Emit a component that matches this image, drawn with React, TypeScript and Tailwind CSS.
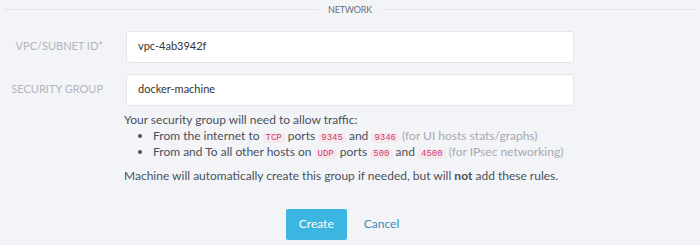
const code = "inline-block leading-[10px] font-['Liberation_Mono',monospace] text-[9px] text-[#d1396a] bg-[#f4eaee] px-[3px] rounded-sm";

export default function App() {
  return (
    <div className="w-[700px] h-[245px] bg-[#f3f4f8] font-['Lato',sans-serif] overflow-hidden">
      <div className="flex items-center gap-[10px] px-[5px] pt-[3px]">
        <div className="h-px flex-1 bg-[#e1e3e8]" />
        <span className="text-[9px] text-[#6c707a] tracking-tight">NETWORK</span>
        <div className="h-px flex-1 bg-[#e1e3e8]" />
      </div>
      <div className="mt-[14px] flex items-center">
        <label className="w-[103px] text-right text-[11px] text-[#b2b5bb]">VPC/SUBNET ID*</label>
        <div className="ml-[23px] w-[448px] h-[32px] bg-white border border-[#e3e5e9] rounded-[3px] flex items-center pl-[11px] text-[11px] text-[#333]">vpc-4ab3942f</div>
      </div>
      <div className="mt-[11px] flex items-center">
        <label className="w-[103px] text-right text-[11px] text-[#b2b5bb]">SECURITY GROUP</label>
        <div className="ml-[23px] w-[448px] h-[32px] bg-white border border-[#e3e5e9] rounded-[3px] flex items-center pl-[11px] text-[11px] text-[#333]">docker-machine</div>
      </div>
      <div className="ml-[124px] mt-[6px] text-[12px] text-[#4b505a] leading-[16px]">
        <p>Your security group will need to allow traffic:</p>
        <ul className="list-disc pl-[29px]">
          <li>From the internet to <span className={code}>TCP</span> ports <span className={code}>9345</span> and <span className={code}>9346</span> <span className="text-[#a6a9b0]">(for UI hosts stats/graphs)</span></li>
          <li>From and To all other hosts on <span className={code}>UDP</span> ports <span className={code}>500</span> and <span className={code}>4500</span> <span className="text-[#a6a9b0]">(for IPsec networking)</span></li>
        </ul>
        <p className="mt-[8px]">Machine will automatically create this group if needed, but will <b className="font-bold">not</b> add these rules.</p>
      </div>
      <div className="mt-[25px] flex justify-center items-center gap-[17px] pr-[15px]">
        <button className="w-[61px] h-[31px] bg-[#3ab6e1] text-white text-[12px] rounded-[2px]">Create</button>
        <button className="text-[12px] text-[#3a8dc0]">Cancel</button>
      </div>
    </div>
  );
}
